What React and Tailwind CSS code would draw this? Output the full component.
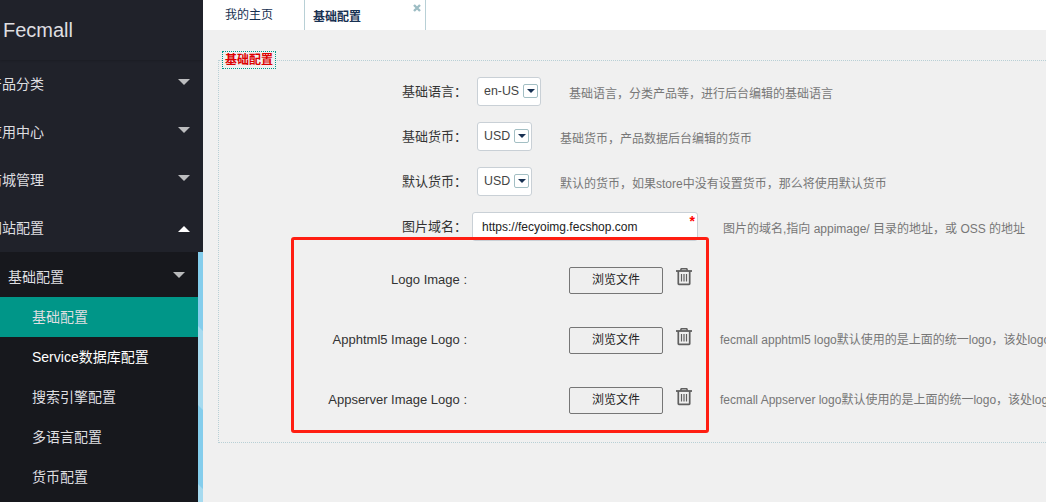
const menu = [
  { label: '产品分类', open: false },
  { label: '应用中心', open: false },
  { label: '商城管理', open: false },
  { label: '网站配置', open: true },
];

const subMenu = ['基础配置', 'Service数据库配置', '搜索引擎配置', '多语言配置', '货币配置'];

const selectRows = [
  { label: '基础语言：', value: 'en-US', width: 'w-16', hint: '基础语言，分类产品等，进行后台编辑的基础语言' },
  { label: '基础货币：', value: 'USD', width: 'w-[55px]', hint: '基础货币，产品数据后台编辑的货币' },
  { label: '默认货币：', value: 'USD', width: 'w-[55px]', hint: '默认的货币，如果store中没有设置货币，那么将使用默认货币' },
];

const fileRows = [
  { label: 'Logo Image :', hint: '' },
  { label: 'Apphtml5 Image Logo :', hint: 'fecmall apphtml5 logo默认使用的是上面的统一logo，该处logo' },
  { label: 'Appserver Image Logo :', hint: 'fecmall Appserver logo默认使用的是上面的统一logo，该处logo' },
];

function Caret({ up, className }) {
  return (
    <svg width="12" height="6" viewBox="0 0 12 6" className={className}>
      <path d={up ? 'M0 6 6 0l6 6z' : 'M0 0h12L6 6z'} fill="currentColor" />
    </svg>
  );
}

function Label({ children }) {
  return <div className="w-[248px] shrink-0 text-right text-[13px] text-[#333]">{children}</div>;
}

function Select({ value, width }) {
  return (
    <div className={`${width} flex h-[29px] shrink-0 items-center justify-between rounded-[3px] border border-[#c9d0d6] bg-white pr-[2px] pl-[6px] text-[12.4px] text-[#444]`}>
      <span>{value}</span>
      <span className="mb-[2px] flex h-[14px] w-[15px] items-center justify-center rounded-[2px] border border-[#a3bfc4]">
        <svg width="8" height="4" viewBox="0 0 8 4">
          <path d="M0 0h8L4 4z" fill="#183152" />
        </svg>
      </span>
    </div>
  );
}

function Trash() {
  return (
    <svg width="16" height="19" viewBox="0 0 16 19" fill="none" stroke="#606060" className="mb-[7px] ml-[13px] shrink-0">
      <path d="M0 4h16" strokeWidth="1.8" />
      <path d="M4.5 3.8 5.3 1.8h5.4l.8 2" strokeWidth="1.6" />
      <path d="M2.3 4v12.8q0 .6.6.6h10.2q.6 0 .6-.6V4" strokeWidth="1.7" />
      <path d="M5.5 7v7.5M8 7v7.5M10.5 7v7.5" strokeWidth="1.2" />
    </svg>
  );
}

function Sidebar() {
  return (
    <aside className="flex w-[203px] shrink-0 flex-col overflow-hidden bg-[#20222a] text-[14px] text-[#dedee0]">
      <div className="h-[60px] pl-[3px] text-[20px] leading-[60px] shadow-[0_1px_2px_0_rgba(0,0,0,.15)]">Fecmall</div>
      {menu.map((m) => (
        <div key={m.label} className="flex h-12 shrink-0 items-center justify-between pr-[13px]">
          <span className="-ml-3 whitespace-nowrap">{m.label}</span>
          <Caret up={m.open} className={m.open ? 'mt-[2px] text-white' : 'mb-[4px] text-[#bcbdbf]'} />
        </div>
      ))}
      <div className="flex flex-1">
        <div className="w-[198px] bg-[#17181d]">
          <div className="flex h-[45px] items-center justify-between pr-[13px] pl-2 pt-[5px]">
            <span>基础配置</span>
            <Caret className="mb-[4px] text-[#b9babb]" />
          </div>
          {subMenu.map((s, i) => (
            <div
              key={s}
              className={`h-10 pl-8 leading-10 whitespace-nowrap ${i === 0 ? 'bg-[#009688]' : ''} ${i === 1 ? 'text-white' : ''}`}
            >
              {s}
            </div>
          ))}
        </div>
        <svg width="5" height="250" viewBox="0 0 5 250">
          <path d="M0 0h5v250H0z" fill="#84cdec" />
          <path d="M0 74l5 5v79l-5-5zM0 232l5 5v13H0z" fill="#a6daef" />
        </svg>
      </div>
    </aside>
  );
}

export default function App() {
  return (
    <div className="relative flex h-[502px] w-[1046px] overflow-hidden bg-[#f0f0f0] font-['Liberation_Sans','Noto_Sans_CJK_SC',sans-serif]">
      <Sidebar />
      <main className="min-w-0 flex-1 overflow-hidden">
        <div className="flex h-[30px] bg-white text-[12px] text-[#183152]">
          <div className="w-[102px] border-r border-[#b8d0d6] pl-[22px] leading-[30px]">我的主页</div>
          <div className="flex w-[121px] justify-between border-r border-[#b8d0d6] pr-1 pl-2">
            <span className="font-bold leading-[34px]">基础配置</span>
            <svg width="8" height="8" viewBox="0 0 8 8" className="mt-[4px]">
              <path d="M1 1l6 6M7 1L1 7" stroke="#9dbdc4" strokeWidth="2.4" />
            </svg>
          </div>
        </div>
        <fieldset className="mt-[21px] ml-[15px] h-[392px] w-[900px] border border-dotted border-[#b8d0d6]">
          <legend className="ml-[3px] h-[18px] border border-dotted border-[#009688] px-[2px] text-[12px] leading-4 font-bold text-[#d00]">
            基础配置
          </legend>
          {selectRows.map((r) => (
            <div key={r.label} className="flex h-[45px] items-center whitespace-nowrap">
              <Label>{r.label}</Label>
              <div className="ml-[10px] flex items-center">
                <Select value={r.value} width={r.width} />
                <span className="mt-1 ml-7 text-[12px] text-[#777]">{r.hint}</span>
              </div>
            </div>
          ))}
          <div className="flex h-[45px] items-center whitespace-nowrap">
            <Label>图片域名：</Label>
            <div className="ml-[5px] flex h-[29px] w-[226px] shrink-0 justify-between rounded-[3px] border border-[#c9d0d6] bg-white pr-[2px] pl-[9px] text-[12px] leading-[28px] text-[#222]">
              <span>https://fecyoimg.fecshop.com</span>
              <span className="text-[14px] leading-[17px] font-bold text-[#f00]">*</span>
            </div>
            <span className="mt-1 ml-[25px] text-[12px] text-[#777]">图片的域名,指向 appimage/ 目录的地址，或 OSS 的地址</span>
          </div>
          {fileRows.map((r) => (
            <div key={r.label} className="flex h-[60px] items-center pt-px whitespace-nowrap">
              <Label>
                <span className="block pt-px">{r.label}</span>
              </Label>
              <button className="mt-[2px] ml-[102px] h-[27px] w-[94px] shrink-0 rounded-[2px] border border-[#767676] bg-[#efefef] pb-px text-[12px] text-[#222]">
                浏览文件
              </button>
              <Trash />
              <span className="ml-7 text-[12px] text-[#777]">{r.hint}</span>
            </div>
          ))}
        </fieldset>
      </main>
      <div className="absolute top-[237px] left-[291px] h-[196px] w-[418px] rounded-[3px] border-3 border-[#ff1e12]" />
    </div>
  );
}
